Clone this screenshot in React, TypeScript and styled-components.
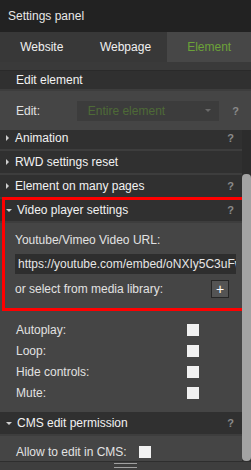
import React from 'react';
import styled, { createGlobalStyle } from 'styled-components';

const GlobalStyle = createGlobalStyle`
    html, body {
        margin: 0;
        padding: 0;
        background: #454545;
    }
    body {
        font-family: 'Liberation Sans', Arial, sans-serif;
        font-size: 12px;
        color: #e2e2e2;
    }
`;

const Panel = styled.div`
    width: 251px;
    height: 470px;
    display: flex;
    flex-direction: column;
    background: #454545;
    overflow: hidden;
`;

const TitleBar = styled.div`
    height: 32px;
    display: flex;
    align-items: center;
    padding-left: 8px;
    background: #222222;
    color: #e8e8e8;
    font-size: 12px;
`;

const Tabs = styled.div`
    height: 30px;
    display: grid;
    grid-template-columns: repeat(3, 1fr);
    background: #383838;
`;

const Tab = styled.div<{ active?: boolean }>`
    display: flex;
    align-items: center;
    justify-content: center;
    background: ${props => (props.active ? '#474747' : 'transparent')};
    color: ${props => (props.active ? '#6ca238' : '#f0f0f0')};
`;

const Spacer = styled.div`
    height: 8px;
    background: #3a3a3a;
    border-bottom: 1px solid #2a2a2a;
`;

const SectionHeader = styled.div<{ flat?: boolean }>`
    height: ${props => (props.flat ? 18 : 22)}px;
    display: flex;
    align-items: center;
    padding-left: ${props => (props.flat ? 16 : 6)}px;
    padding-right: 8px;
    background: #303030;
    color: #f2f2f2;
    border-bottom: 2px solid #3d3d3d;
`;

const Caret = styled.span<{ open?: boolean }>`
    width: 0;
    height: 0;
    margin-right: ${props => (props.open ? 5 : 6)}px;
    border-style: solid;
    border-color: transparent;
    ${props =>
        props.open
            ? 'border-width: 3px 3px 0 3px; border-top-color: #cfcfcf; margin-top: 1px;'
            : 'border-width: 3px 0 3px 3px; border-left-color: #cfcfcf;'}
`;

const HeaderTitle = styled.span`
    flex: 1;
`;

const Help = styled.span`
    color: #8a8a8a;
    font-weight: bold;
    font-size: 11px;
`;

const EditRow = styled.div`
    height: 39px;
    display: flex;
    align-items: center;
    padding-left: 16px;
    padding-right: 12px;
    background: #454545;
`;

const EditLabel = styled.span`
    width: 61px;
`;

const Select = styled.div`
    width: 143px;
    height: 20px;
    display: flex;
    align-items: center;
    justify-content: space-between;
    padding: 0 8px 0 11px;
    box-sizing: border-box;
    background: #3c3c3c;
    color: #4e6a37;
    margin-right: 13px;
`;

const SelectArrow = styled.span`
    width: 0;
    height: 0;
    border-style: solid;
    border-color: transparent;
    border-width: 3px 3px 0 3px;
    border-top-color: #6a6a6a;
`;

const ScrollArea = styled.div`
    flex: 1;
    display: flex;
    min-height: 0;
`;

const ScrollContent = styled.div`
    flex: 1;
    overflow: hidden;
    background: #454545;
`;

const ScrollInner = styled.div`
    margin-top: -3px;
`;

const Track = styled.div`
    width: 9px;
    background: #2c2c2c;
    display: flex;
    flex-direction: column;
`;

const Thumb = styled.div`
    margin-top: 44px;
    height: 287px;
    background: #a3a3a3;
    border-radius: 4px;
`;

const Section = styled.div`
    position: relative;
`;

const Highlight = styled.div`
    position: absolute;
    left: 2px;
    top: -2px;
    width: 244px;
    height: 114px;
    border: 3px solid #ff0000;
    box-sizing: border-box;
    pointer-events: none;
`;

const VideoBody = styled.div`
    padding: 10px 6px 16px 15px;
    display: flex;
    flex-direction: column;
`;

const FieldLabel = styled.div`
    line-height: 14px;
    margin-bottom: 7px;
`;

const UrlInput = styled.div`
    width: 221px;
    height: 20px;
    display: flex;
    align-items: center;
    padding-left: 3px;
    box-sizing: border-box;
    background: #2e2e2e;
    color: #e6e6e6;
    white-space: nowrap;
    overflow: hidden;
    margin-bottom: 6px;
`;

const MediaRow = styled.div`
    display: flex;
    align-items: center;
    justify-content: space-between;
    width: 214px;
`;

const PlusButton = styled.div`
    width: 18px;
    height: 18px;
    box-sizing: border-box;
    border: 1px solid #262626;
    background: #545454;
    color: #ffffff;
    display: flex;
    align-items: center;
    justify-content: center;
    font-size: 14px;
    line-height: 1;
`;

const OptionList = styled.div`
    padding: 5px 0 9px 16px;
    display: flex;
    flex-direction: column;
`;

const OptionRow = styled.div`
    height: 21px;
    display: grid;
    grid-template-columns: 171px 12px;
    align-items: center;
`;

const Checkbox = styled.span`
    width: 12px;
    height: 12px;
    background: #f1f1f1;
`;

const CmsRow = styled.div`
    height: 31px;
    display: flex;
    align-items: center;
    gap: 12px;
    padding-left: 16px;
`;

const Footer = styled.div`
    height: 7px;
    border-top: 1px solid #2e2e2e;
    background: #3e3e3e;
    display: flex;
    justify-content: center;
    padding-top: 1px;
`;

const Grip = styled.div`
    width: 23px;
    height: 3px;
    border-top: 1px solid #a0a0a0;
    border-bottom: 1px solid #a0a0a0;
`;

const options = ['Autoplay:', 'Loop:', 'Hide controls:', 'Mute:'];

const Header = ({ title, open, help = true }: { title: string; open?: boolean; help?: boolean }) => (
    <SectionHeader>
        <Caret open={open} />
        <HeaderTitle>{title}</HeaderTitle>
        {help && <Help>?</Help>}
    </SectionHeader>
);

const App = () => (
    <>
        <GlobalStyle />
        <Panel>
            <TitleBar>Settings panel</TitleBar>
            <Tabs>
                <Tab>Website</Tab>
                <Tab>Webpage</Tab>
                <Tab active>Element</Tab>
            </Tabs>
            <Spacer />
            <SectionHeader flat>Edit element</SectionHeader>
            <EditRow>
                <EditLabel>Edit:</EditLabel>
                <Select>
                    Entire element
                    <SelectArrow />
                </Select>
                <Help>?</Help>
            </EditRow>
            <ScrollArea>
                <ScrollContent>
                    <ScrollInner>
                        <Header title="Animation" />
                        <Header title="RWD settings reset" help={false} />
                        <Header title="Element on many pages" />
                        <Section>
                            <Header title="Video player settings" open />
                            <VideoBody>
                                <FieldLabel>Youtube/Vimeo Video URL:</FieldLabel>
                                <UrlInput>https://youtube.com/embed/oNXIy5C3uFw</UrlInput>
                                <MediaRow>
                                    <span>or select from media library:</span>
                                    <PlusButton>+</PlusButton>
                                </MediaRow>
                            </VideoBody>
                            <Highlight />
                            <OptionList>
                                {options.map(option => (
                                    <OptionRow key={option}>
                                        <span>{option}</span>
                                        <Checkbox />
                                    </OptionRow>
                                ))}
                            </OptionList>
                        </Section>
                        <Header title="CMS edit permission" open />
                        <CmsRow>
                            <span>Allow to edit in CMS:</span>
                            <Checkbox />
                        </CmsRow>
                    </ScrollInner>
                </ScrollContent>
                <Track>
                    <Thumb />
                </Track>
            </ScrollArea>
            <Footer>
                <Grip />
            </Footer>
        </Panel>
    </>
);

export default App;
